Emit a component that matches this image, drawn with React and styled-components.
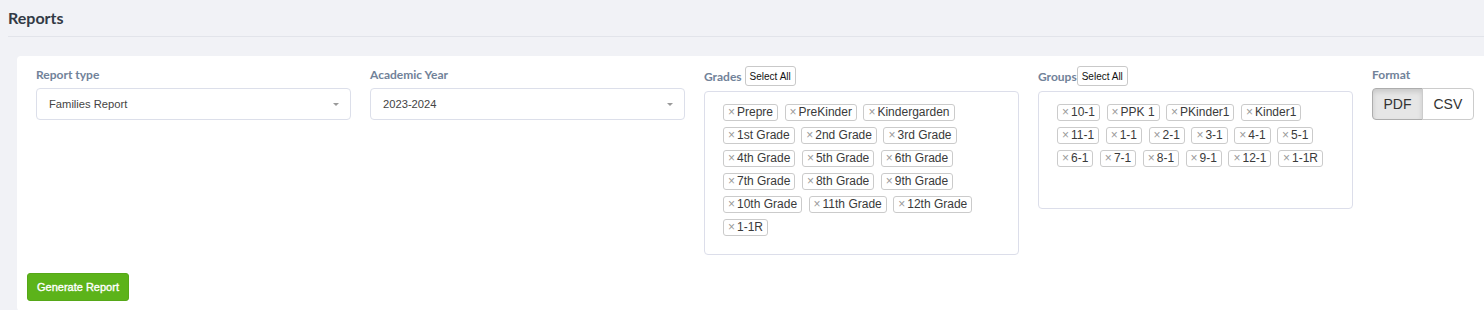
import React from "react";
import styled, { createGlobalStyle, css } from "styled-components";

const GlobalStyle = createGlobalStyle`
  html, body {
    margin: 0;
    padding: 0;
    background: #f1f2f6;
    overflow: hidden;
  }
  body {
    font-family: "Liberation Sans", Arial, sans-serif;
  }
`;

const Page = styled.div`
  padding: 0 0 0 8px;
  width: 1800px;
`;

const Header = styled.div`
  height: 37px;
  border-bottom: 1px solid #e2e4ea;
  box-sizing: border-box;
  display: flex;
  align-items: flex-start;
`;

const Title = styled.h1`
  margin: 0;
  padding-top: 8px;
  font-family: Lato, "Noto Sans", sans-serif;
  font-weight: 700;
  font-size: 16px;
  line-height: 20px;
  color: #323a45;
`;

const Card = styled.div`
  margin: 19px 0 0 9px;
  background: #fff;
  border-radius: 4px;
  padding: 10px;
  width: 1700px;
`;

const Fields = styled.div`
  display: grid;
  grid-template-columns: repeat(5, 315px);
  column-gap: 19px;
  align-items: start;
  margin-left: 9px;
`;

const Field = styled.div`
  display: flex;
  flex-direction: column;
`;

const LabelRow = styled.div`
  display: flex;
  align-items: center;
  gap: ${(p) => p.$gap || 0}px;
  height: ${(p) => (p.$withButton ? 20 : 17)}px;
  margin-bottom: 5px;
`;

const Label = styled.label`
  font-family: Lato, "Noto Sans", sans-serif;
  font-weight: 700;
  font-size: 12px;
  line-height: 17px;
  color: #718299;
`;

const SmallButton = styled.button`
  font-family: "Liberation Sans", Arial, sans-serif;
  font-size: 10px;
  height: 20px;
  padding: 0 4px;
  background: #fff;
  color: #111;
  border: 1px solid #c9c9c9;
  border-radius: 3px;
  cursor: pointer;
`;

const SelectBox = styled.div`
  height: 32px;
  box-sizing: border-box;
  border: 1px solid #dcdfea;
  border-radius: 4px;
  display: flex;
  align-items: center;
  justify-content: space-between;
  padding: 0 11px 0 12px;
  font-size: 11.2px;
  color: #444;
`;

const Caret = styled.span`
  width: 0;
  height: 0;
  border-left: 3.5px solid transparent;
  border-right: 3.5px solid transparent;
  border-top: 3.5px solid #9a9a9a;
`;

const TagBox = styled.div`
  box-sizing: border-box;
  border: 1px solid #dcdeea;
  border-radius: 4px;
  padding: 12px 12px 12px 18px;
  display: flex;
  flex-wrap: wrap;
  align-content: flex-start;
`;

const Tag = styled.span`
  display: inline-block;
  height: 17px;
  line-height: 15px;
  box-sizing: border-box;
  border: 1px solid #cbcbcb;
  border-radius: 3px;
  padding: 0 4px;
  margin: 0 6.5px 6px 0;
  font-size: 12px;
  color: #3a3a3a;
  white-space: nowrap;
  background: #fff;
`;

const Remove = styled.span`
  color: #9a9a9a;
  margin-right: 2px;
`;

const SearchSlot = styled.span`
  display: inline-block;
  width: 30px;
  height: 17px;
  margin-bottom: 6px;
`;

const ButtonGroup = styled.div`
  display: flex;
`;

const ToggleButton = styled.button`
  font-family: "Liberation Sans", Arial, sans-serif;
  font-size: 14px;
  height: 32px;
  padding: 0 10.5px;
  color: #333;
  background: #fff;
  border: 1px solid #ccc;
  cursor: pointer;
  &:first-child {
    border-radius: 4px 0 0 4px;
  }
  &:last-child {
    border-radius: 0 4px 4px 0;
    margin-left: -1px;
  }
  ${(p) =>
    p.$active &&
    css`
      background: #e6e6e6;
      border-color: #adadad;
      box-shadow: inset 0 3px 5px rgba(0, 0, 0, 0.125);
    `}
`;

const Footer = styled.div`
  margin-top: 18px;
`;

const PrimaryButton = styled.button`
  font-family: "Liberation Sans", Arial, sans-serif;
  font-size: 11px;
  font-weight: 400;
  -webkit-text-stroke: 0.35px #fff;
  height: 28px;
  padding: 0 9px;
  color: #fff;
  background: #5cb31a;
  border: 1px solid #56a818;
  border-radius: 3px;
  cursor: pointer;
`;

const grades = [
  "Prepre",
  "PreKinder",
  "Kindergarden",
  "1st Grade",
  "2nd Grade",
  "3rd Grade",
  "4th Grade",
  "5th Grade",
  "6th Grade",
  "7th Grade",
  "8th Grade",
  "9th Grade",
  "10th Grade",
  "11th Grade",
  "12th Grade",
  "1-1R",
];

const groups = [
  "10-1",
  "PPK 1",
  "PKinder1",
  "Kinder1",
  "11-1",
  "1-1",
  "2-1",
  "3-1",
  "4-1",
  "5-1",
  "6-1",
  "7-1",
  "8-1",
  "9-1",
  "12-1",
  "1-1R",
];

function TagList({ items }) {
  return (
    <TagBox>
      {items.map((t) => (
        <Tag key={t}>
          <Remove>×</Remove>
          {t}
        </Tag>
      ))}
      <SearchSlot />
    </TagBox>
  );
}

function Select({ value }) {
  return (
    <SelectBox>
      <span>{value}</span>
      <Caret />
    </SelectBox>
  );
}

export default function App() {
  return (
    <>
      <GlobalStyle />
      <Page>
        <Header>
          <Title>Reports</Title>
        </Header>
        <Card>
          <Fields>
            <Field>
              <LabelRow>
                <Label>Report type</Label>
              </LabelRow>
              <Select value="Families Report" />
            </Field>
            <Field>
              <LabelRow>
                <Label>Academic Year</Label>
              </LabelRow>
              <Select value="2023-2024" />
            </Field>
            <Field>
              <LabelRow $withButton $gap={3}>
                <Label>Grades</Label>
                <SmallButton>Select All</SmallButton>
              </LabelRow>
              <TagList items={grades} />
            </Field>
            <Field>
              <LabelRow $withButton>
                <Label>Groups</Label>
                <SmallButton>Select All</SmallButton>
              </LabelRow>
              <TagList items={groups} />
            </Field>
            <Field>
              <LabelRow>
                <Label>Format</Label>
              </LabelRow>
              <ButtonGroup>
                <ToggleButton $active>PDF</ToggleButton>
                <ToggleButton>CSV</ToggleButton>
              </ButtonGroup>
            </Field>
          </Fields>
          <Footer>
            <PrimaryButton>Generate Report</PrimaryButton>
          </Footer>
        </Card>
      </Page>
    </>
  );
}
